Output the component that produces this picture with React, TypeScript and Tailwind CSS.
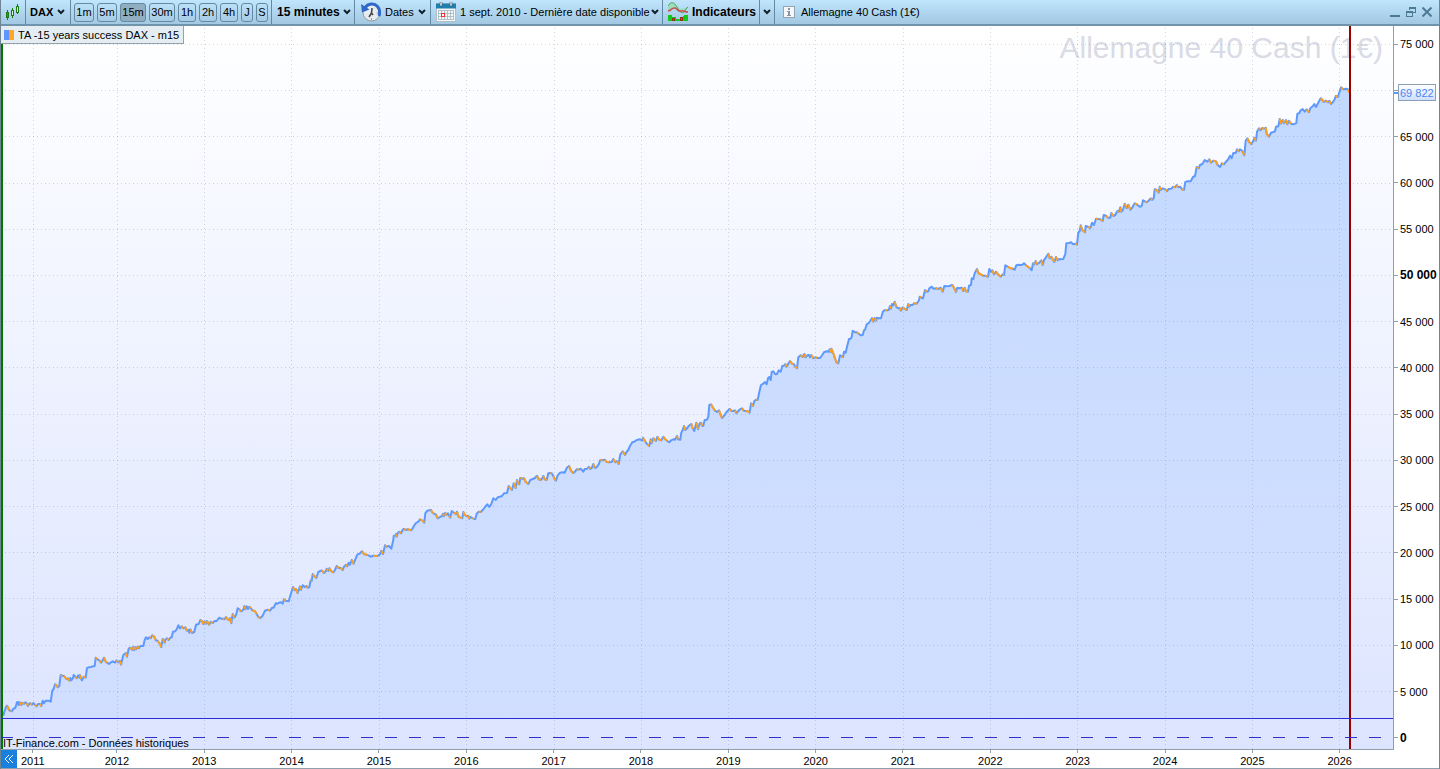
import { useState } from "react";
import type { ReactNode } from "react";

type Trace = {
  x: number;
  y: number;
  points: string;
};

const timeframes = [
  { name: "1m", width: "w-5" },
  { name: "5m", width: "w-5" },
  { name: "15m", width: "w-[26px]" },
  { name: "30m", width: "w-[26px]" },
  { name: "1h", width: "w-[18px]" },
  { name: "2h", width: "w-[18px]" },
  { name: "4h", width: "w-[18px]" },
  { name: "J", width: "w-3" },
  { name: "S", width: "w-3" },
];

const prices = [
  "75 000", "70 000", "65 000", "60 000", "55 000", "50 000", "45 000", "40 000",
  "35 000", "30 000", "25 000", "20 000", "15 000", "10 000", "5 000", "0",
];

const years = [
  "2012", "2013", "2014", "2015", "2016", "2017", "2018", "2019",
  "2020", "2021", "2022", "2023", "2024", "2025", "2026",
];

const WIDTH = 1392;
const HEIGHT = 723;
const BASELINE = 692;

const gridX = [32, 116, 203, 290, 378, 465, 553, 640, 727, 814, 902, 989, 1076, 1164, 1251, 1338];
const gridY = Array.from({ length: 15 }, (_, i) => Math.round(18 + i * 46.2));

// Equity curve in five runs. Each run has an origin, its points are in thirds of a unit.
const traces: Trace[] = [
  {
    x: -1,
    y: 514,
    points:
      "10,527 13,515 16,508 18,500 21,497 25,503 27,511 32,512 36,514 40,506 46,504 51,487 54,486 56,495 60,487 64,495 67,488 72,492 76,487 80,490 84,498 88,491 91,490 96,494 100,489 104,494 110,499 114,492 120,492 124,498 128,482 132,490 137,482 145,482 152,485 157,452 161,447 165,433 170,436 173,442 178,438 182,405 187,407 192,408 196,413 200,418 204,415 208,422 211,414 214,421 218,416 221,405 226,410 230,415 235,406 238,413 240,405 243,417 246,421 251,410 257,413 261,384 266,382 272,381 284,378 287,353 291,357 298,361 303,368 308,361 312,353 317,365 321,368 327,372 333,367 338,364 345,368 350,361 354,367 360,362 363,374 370,345 377,339 381,350 386,326 391,323 396,330 399,320 402,331 406,321 409,328 413,320 417,325 421,318 430,318 434,300 438,292 443,297 448,292 452,295 457,286 463,290 467,300 473,303 478,309 484,321 488,297 491,303 494,308 496,299 501,295 506,300 511,293 515,292 519,275 526,274 531,266 535,256 540,265 545,259 550,265 556,262 561,272 566,270 568,278 571,268 576,279 583,276 588,254 596,252 601,240 606,243 610,252 614,244 618,251 621,243 627,254 632,245 638,249 644,243 650,243 658,233 663,236 668,236 673,238 678,231 683,238 687,241 691,234 694,250 698,222 703,233 708,225 713,205 718,208 723,214 730,210 733,198 736,208 740,199 744,207 748,200 752,204 757,211 765,214 770,222 775,231 781,234 788,227 795,212 803,209 810,212 816,203 821,203 827,190 832,191 838,188 843,187 848,191 852,178 857,182 866,184 870,170 879,141 884,151 888,147 893,159 900,139 903,150 908,136 914,141 919,138 923,143 928,142 932,121 935,123 938,102 943,108 949,114 955,96 965,91 972,99 977,94 980,86 985,93 988,85 993,93 1000,97 1005,90 1010,78 1016,84 1021,83 1028,90 1032,80 1038,74 1042,79 1046,68 1050,74 1055,60 1061,71 1066,58 1072,44 1080,40 1086,34 1093,43 1103,45 1112,50 1120,47 1132,48 1140,43 1144,32 1149,42 1155,16 1160,20 1167,18 1174,26 1180,0",
  },
  {
    x: 379,
    y: 394,
    points:
      "41,348 46,346 48,342 50,350 53,339 58,335 63,340 68,329 72,327 78,330 84,328 93,331 98,325 103,316 108,309 116,304 120,298 127,301 133,308 136,280 142,272 148,271 153,270 158,278 162,281 168,284 173,295 182,290 186,288 189,281 192,289 195,279 200,284 204,280 207,287 211,293 215,273 222,278 228,283 231,275 236,291 240,292 247,295 250,276 254,284 260,289 265,287 268,296 272,291 277,294 282,297 286,297 290,281 296,275 302,276 308,270 315,261 322,253 328,261 334,252 340,235 347,240 353,232 360,230 366,228 372,220 381,219 386,198 391,205 396,210 401,190 405,196 407,204 411,180 414,190 418,193 421,174 427,176 432,175 437,185 445,192 451,180 458,177 465,174 471,167 476,178 482,180 487,175 490,168 494,178 500,180 505,160 511,159 515,160 520,168 525,180 528,182 533,166 540,158 548,157 554,158 560,144 567,138 573,152 580,159 585,155 590,148 596,149 602,146 610,155 614,147 622,146 627,140 631,147 636,143 640,132 644,143 649,143 656,133 661,120 667,121 674,119 680,126 688,127 695,126 700,117 706,127 711,123 716,132 721,103 728,94 735,105 740,95 745,90 750,78 757,67 763,65 770,60 780,58 786,62 789,53 797,67 802,73 808,78 812,58 815,70 820,55 828,63 832,50 838,59 844,61 850,50 856,58 861,62 868,67 873,61 880,58 885,59 891,48 894,58 901,59 904,38 908,30 912,18 916,30 921,25 927,17 934,12 939,27 943,33 949,8 954,28 959,10 963,8 967,18 970,17 974,0",
  },
  {
    x: 699,
    y: 274,
    points:
      "15,360 21,359 25,350 28,315 33,313 38,322 45,332 51,336 57,331 61,342 66,354 74,345 80,335 89,327 95,333 100,333 105,331 109,340 115,333 120,328 126,325 131,332 138,333 144,334 149,338 153,310 159,318 163,303 169,299 173,300 178,276 183,255 190,251 195,246 200,253 204,235 208,231 212,240 215,216 220,214 226,223 231,222 236,211 242,215 247,198 252,197 256,192 260,200 264,193 270,183 276,191 281,192 285,199 291,205 295,172 302,166 308,171 313,162 317,172 322,166 327,165 330,172 334,165 340,175 346,172 352,174 360,174 367,165 372,157 380,154 385,155 389,148 392,157 394,146 400,160 406,178 410,188 415,190 420,166 425,169 429,171 432,155 437,158 441,140 447,117 452,116 455,111 458,92 465,97 470,97 476,101 482,106 488,105 492,91 495,89 500,73 505,70 510,64 516,54 520,65 524,54 528,62 531,53 536,55 543,55 549,34 555,30 561,31 566,30 570,18 573,26 576,12 580,16 584,5 589,20 594,25 599,24 603,32 608,22 613,26 620,30 625,12 628,20 632,15 638,15 642,10 650,11 657,1",
  },
  {
    x: 909,
    y: 209,
    points:
      "29,185 34,188 39,190 45,165 50,170 55,169 58,160 65,155 70,161 78,160 85,162 92,158 98,170 103,153 110,154 118,153 127,150 133,160 138,171 142,158 148,160 155,158 160,168 164,158 168,169 174,170 177,152 183,150 185,130 190,132 194,115 201,102 205,114 212,118 219,122 226,122 234,125 238,102 243,110 247,106 252,118 258,110 264,118 272,125 278,118 282,120 286,91 293,95 300,99 308,101 314,104 319,91 325,89",
  },
  {
    x: 999,
    y: 54,
    points:
      "60,555 66,555 72,550 78,556 84,560 90,565 95,571 99,550 103,553 107,543 111,553 118,548 124,541 128,555 132,540 138,532 145,521 149,535 154,530 158,538 163,546 168,531 173,541 178,537 184,538 190,537 196,522 199,490 207,489 213,487 220,493 226,491 231,494 235,458 239,453 242,436 247,450 255,457 257,438 264,440 271,445 276,428 282,435 288,416 295,417 301,418 308,423 311,405 318,407 324,413 331,413 334,399 340,408 346,405 352,393 356,396 361,382 364,395 369,390 374,371 380,385 385,374 391,389 396,384 404,370 412,374 419,380 425,378 429,361 435,364 440,367 445,363 452,355 456,360 461,355 464,328 470,330 476,338 479,320 482,330 488,325 495,328 501,333 506,327 513,326 520,320 526,322 530,315 535,322 541,320 546,328 552,330 556,306 563,304 572,304 579,291 585,288 590,261 596,265 600,255 607,252 614,240 622,245 628,238 633,248 640,242 648,244 653,255 660,261 666,250 672,253 678,245 685,238 690,227 695,235 700,219 707,219 711,208 716,214 720,208 727,213 733,226 737,182 742,175 748,187 754,192 760,183 763,173 768,182 771,155 777,145 781,151 786,144 793,146 797,143 800,162 807,170 813,158 820,156 825,154 828,140 835,139 839,117 843,131 848,120 852,130 858,120 862,133 867,122 873,131 880,133 889,129 892,102 898,99 902,91 908,87 914,95 920,88 927,97 931,85 938,79 943,72 948,81 953,71 958,62 962,55 967,60 972,66 978,62 984,67 988,62 993,72 998,67 1004,58 1007,48 1013,51 1018,38 1023,22 1030,28 1038,26 1044,28 1048,38",
  },
];

const curve = traces.flatMap((trace) =>
  trace.points.split(" ").map((pair) => {
    const [px, py] = pair.split(",").map(Number);
    return [trace.x + px / 3, trace.y + py / 3];
  })
);

const curvePath = "M" + curve.map(([x, y]) => `${x.toFixed(1)} ${y.toFixed(1)}`).join("L");
const areaPath = `${curvePath}V${BASELINE}H${curve[0][0].toFixed(1)}Z`;

// falling legs are painted orange over the blue line, some of the small ones stay blue
const lossPath = curve
  .slice(1)
  .map(([x, y], i) => {
    const [px, py] = curve[i];
    const loss = y > py && (y - py > 3 || i % 3 !== 0);
    return loss ? `M${px.toFixed(1)} ${py.toFixed(1)}L${x.toFixed(1)} ${y.toFixed(1)}` : "";
  })
  .join("");

function Chevron() {
  return (
    <svg viewBox="0 0 8 6" className="w-2 h-1.5 shrink-0" fill="none" stroke="#10202c" strokeWidth="2">
      <path d="M1 1l3 3 3-3" />
    </svg>
  );
}

function Dropdown({ label, value, className }: { label: string; value: string; className: string }) {
  return (
    <label className="relative flex items-center">
      <select aria-label={label} className={`appearance-none bg-transparent h-5 outline-none ${className}`}>
        <option>{value}</option>
      </select>
      <span className="absolute right-0 pointer-events-none">
        <Chevron />
      </span>
    </label>
  );
}

function Section({ className, children }: { className: string; children: ReactNode }) {
  return <div className={`h-full flex items-center shrink-0 border-r border-[#6489a3] ${className}`}>{children}</div>;
}

function CandlesIcon() {
  return (
    <svg viewBox="0 0 14 17" className="w-3.5 h-[17px]" stroke="#1c7c14" fill="none" shapeRendering="crispEdges">
      <path d="M1.5 6v10M6.5 4v3M6.5 12v2M11.5 0v3M11.5 8v2" />
      <rect x="0.5" y="8.5" width="2" height="5" fill="#2c9a1c" />
      <rect x="5.5" y="6.5" width="2" height="5" fill="#d8f4d0" />
      <rect x="10.5" y="2.5" width="2" height="6" fill="#d8f4d0" />
    </svg>
  );
}

function ClockIcon() {
  return (
    <svg viewBox="0 0 20 20" className="w-5 h-5">
      <circle cx="10.5" cy="10.5" r="8.5" fill="#e9ecee" stroke="#8f9aa3" />
      <path d="M10.5 16v2M15.5 11h2" stroke="#8f9aa3" />
      <path d="M4 6C7 1 13.5 1 16.5 4.5C19 7.5 19 11 18 14" stroke="#2f68c8" strokeWidth="3" fill="none" />
      <path d="M0 2l1 8.5 7.5-3z" fill="#2f68c8" />
      <path d="M11 6l-.5 5-2.5 4M10.5 11l1.5 2" stroke="#3b4248" strokeWidth="1.5" fill="none" />
    </svg>
  );
}

function CalendarIcon() {
  return (
    <svg viewBox="0 0 20 20" className="w-5 h-5">
      <rect x="0.5" y="2" width="19" height="17.5" fill="#f4f6f7" stroke="#b4bec6" />
      <rect x="0" y="1.5" width="20" height="5" fill="#1f7fae" />
      <rect x="4" y="0" width="2" height="4" fill="#e8eef2" stroke="#3c4c58" strokeWidth=".5" />
      <rect x="14" y="0" width="2" height="4" fill="#e8eef2" stroke="#3c4c58" strokeWidth=".5" />
      <path
        d="M2 8.5h16M2 11.5h16M2 14.5h16M2 17.5h16M2.5 8.5v9M5.5 8.5v9M8.5 8.5v9M11.5 8.5v9M14.5 8.5v9M17.5 8.5v9"
        stroke="#a5b6c2"
        strokeWidth=".8"
      />
      <rect x="5.5" y="11.5" width="3" height="3" fill="#fff" stroke="#f0322c" />
    </svg>
  );
}

function IndicatorsIcon() {
  return (
    <svg viewBox="0 0 20 20" className="w-5 h-5" fill="none">
      <path d="M0 4C3-1 6 0 9 5s5 7 7 5 2-4 4-5L14 7 7 6 0 9z" fill="#8fdc9a" fillOpacity=".6" />
      <path d="M0 4C3-1 6 0 9 5s5 7 7 5 2-4 4-5" stroke="#3aa856" />
      <path d="M0 9c3 0 4-4 7-3s3 4 6 3 3 1 7 1" stroke="#c8504e" strokeWidth="1.5" />
      <path d="M0 13h4v2h4v2h4v-2h3v-1h1v-1h4v6H0z" fill="#12c81c" />
      <path d="M4.5 16.5h2v2h-2zM12.5 15.5h2v3h-2z" fill="#e8483c" stroke="#a02018" />
    </svg>
  );
}

function ChartWindow() {
  return (
    <div className="relative flex-1 min-w-0 bg-linear-to-b from-white to-[#dce4ff] border-r border-b border-[#8fa0ac]">
      <div className="absolute top-[7px] right-[10px] text-[30px] leading-[30px] text-[#d9dbe5] whitespace-nowrap">
        Allemagne 40 Cash (1€)
      </div>

      <svg
        viewBox={`0 0 ${WIDTH} ${HEIGHT}`}
        preserveAspectRatio="none"
        className="absolute inset-0 w-full h-full"
        fill="none"
        role="img"
        aria-label="TA -15 years success DAX - m15"
      >
        <defs>
          <linearGradient id="equity" gradientUnits="userSpaceOnUse" x1="0" y1="60" x2="0" y2={BASELINE}>
            <stop offset="0" stopColor="#5f9bff" stopOpacity="0.37" />
            <stop offset="1" stopColor="#5f9bff" stopOpacity="0.1" />
          </linearGradient>
        </defs>

        <path d={areaPath} fill="url(#equity)" />

        <g stroke="#6a7ba8" strokeOpacity="0.3" strokeDasharray="1 3" shapeRendering="crispEdges">
          {gridX.map((x) => (
            <path key={x} d={`M${x + 0.5} 2V${HEIGHT}`} />
          ))}
          {gridY.map((y) => (
            <path key={y} d={`M4 ${y + 0.5}H${WIDTH}`} />
          ))}
        </g>

        <path d={curvePath} stroke="#5f99fb" strokeWidth="2" strokeLinejoin="round" />
        <path d={lossPath} stroke="#ffa01e" strokeWidth="2" />

        <g shapeRendering="crispEdges">
          <path d={`M1 0V${HEIGHT}`} stroke="#007800" strokeWidth="2" />
          <path d={`M1349 0V${HEIGHT}`} stroke="#990000" strokeWidth="2" />
          <path d={`M0 ${BASELINE + 0.5}H${WIDTH}`} stroke="#2b2bdc" />
          <path d={`M0 711.5H${WIDTH}`} stroke="#2f2fc8" strokeDasharray="12 12" />
        </g>
      </svg>

      <button className="absolute top-0 left-0 h-[18px] pt-px pl-[3px] pr-1 flex items-center gap-1 bg-[#e4edf2] border-r border-b border-[#93a3ad]">
        <span className="w-2.5 h-2.5 bg-linear-to-r from-[#5f95ff] from-50% to-[#ffa425] to-50%" />
        <span className="whitespace-nowrap">TA -15 years success DAX - m15</span>
      </button>

      <div className="absolute bottom-0 left-0.5 leading-3">IT-Finance.com - Données historiques</div>
    </div>
  );
}

function PriceAxis() {
  return (
    <div className="relative w-[45px] shrink-0 flex flex-col justify-between pt-3 pb-1.5 leading-3">
      {prices.map((price) => {
        const strong = price === "50 000" || price === "0";
        return (
          <div key={price} className="flex items-center gap-0.5 whitespace-nowrap">
            <span className="w-1 h-px bg-[#8fa0ac]" />
            {price !== "70 000" && <span className={strong ? "font-bold text-xs leading-3" : ""}>{price}</span>}
            {price === "70 000" && <span className="h-3" />}
          </div>
        );
      })}
      <div className="absolute top-[58px] left-0 flex items-center">
        <span className="w-1 h-0.5 bg-[#5f99fb]" />
        <span className="h-[17px] px-px flex items-center border border-[#8aa0b4] bg-linear-to-b from-white to-[#cfdffc] text-[#4a86f0]">
          69 822
        </span>
      </div>
    </div>
  );
}

function TimeAxis() {
  const tick = (year: string) => (
    <div key={year} className="flex flex-col items-center shrink-0">
      <span className="w-px h-[3px] shrink-0 bg-[#8fa0ac]" />
      <span className="leading-4">{year}</span>
    </div>
  );

  return (
    <div className="h-[19px] shrink-0 flex bg-white border-b border-[#8fa0ac]">
      <button aria-label="Reculer" className="w-4 h-full shrink-0 flex items-center justify-center bg-[#1a80de]">
        <svg viewBox="0 0 10 10" className="w-2.5 h-2.5" fill="none" stroke="#fff">
          <path d="M5 1L1 5l4 4M9 1L5 5l4 4" />
        </svg>
      </button>
      <div className="pl-1 shrink-0">{tick("2011")}</div>
      <div className="flex-1 flex justify-between pl-[60px] pr-[87px]">{years.map(tick)}</div>
    </div>
  );
}

export default function App() {
  const [timeframe, setTimeframe] = useState("15m");

  return (
    <main className="h-screen flex flex-col bg-white border-l border-r border-[#6f8591] overflow-hidden font-['Liberation_Sans',Arial,sans-serif] text-[11px] text-black">
      <header className="h-[26px] shrink-0 flex items-center bg-linear-to-b from-[#c0e5fd] to-[#a2c8e2] border-b-2 border-[#7094ab] whitespace-nowrap">
        <Section className="w-[25px] justify-center">
          <CandlesIcon />
        </Section>
        <Section className="w-[45px] pl-1">
          <Dropdown label="Instrument" value="DAX" className="w-[35px] font-bold" />
        </Section>
        <Section className="w-[201px] pl-[3px] gap-[3px]">
          {timeframes.map(({ name, width }) => (
            <button
              key={name}
              onClick={() => setTimeframe(name)}
              className={`h-[19px] rounded-[3px] border border-[#6489a3] flex items-center justify-center ${width} ${
                name === timeframe ? "bg-[#91adc0]" : ""
              }`}
            >
              {name}
            </button>
          ))}
        </Section>
        <Section className="w-[83px] pl-[5px]">
          <Dropdown label="Unité de temps" value="15 minutes" className="w-[74px] font-bold text-xs" />
        </Section>
        <Section className="w-[76px] pl-1.5">
          <button className="flex items-center gap-1">
            <ClockIcon />
            <span>Dates</span>
            <Chevron />
          </button>
        </Section>
        <Section className="w-[232px] pl-[5px] gap-1">
          <CalendarIcon />
          <Dropdown label="Période" value="1 sept. 2010 - Dernière date disponible" className="w-[199px]" />
        </Section>
        <Section className="w-[97px] pl-[5px]">
          <button className="flex items-center gap-1 font-bold text-xs">
            <IndicatorsIcon />
            Indicateurs
          </button>
        </Section>
        <Section className="w-[15px] justify-center">
          <button aria-label="Plus d'indicateurs">
            <Chevron />
          </button>
        </Section>
        <div className="flex-1 flex items-center pl-2 gap-1.5">
          <svg viewBox="0 0 12 12" className="w-3 h-3" shapeRendering="crispEdges">
            <rect x="0.5" y="0.5" width="11" height="11" fill="#f6f7f8" stroke="#93a5b2" />
            <path d="M5 2h2v2H5zM4 5h3v4h1v1H4V9h1V6H4z" fill="#8796a2" />
          </svg>
          <span>Allemagne 40 Cash (1€)</span>
        </div>
        <div className="flex items-center gap-1.5 pr-[7px]">
          <button aria-label="Réduire">
            <svg viewBox="0 0 10 10" className="w-2.5 h-2.5">
              <path d="M0 8h10v2H0z" fill="#4c7a95" />
            </svg>
          </button>
          <button aria-label="Restaurer">
            <svg viewBox="0 0 10 10" className="w-2.5 h-2.5" fill="none" stroke="#4c7a95" shapeRendering="crispEdges">
              <path d="M3.5 3V.5h6v5H7M3 1h7M0 5h7" />
              <path d="M.5 4.5h6v5h-6z" />
            </svg>
          </button>
          <button aria-label="Fermer">
            <svg viewBox="0 0 10 10" className="w-2.5 h-2.5" stroke="#4c7a95" strokeWidth="2">
              <path d="M.5.5l9 9M9.5.5l-9 9" />
            </svg>
          </button>
        </div>
      </header>

      <div className="flex-1 min-h-0 flex">
        <ChartWindow />
        <PriceAxis />
      </div>

      <TimeAxis />
    </main>
  );
}
